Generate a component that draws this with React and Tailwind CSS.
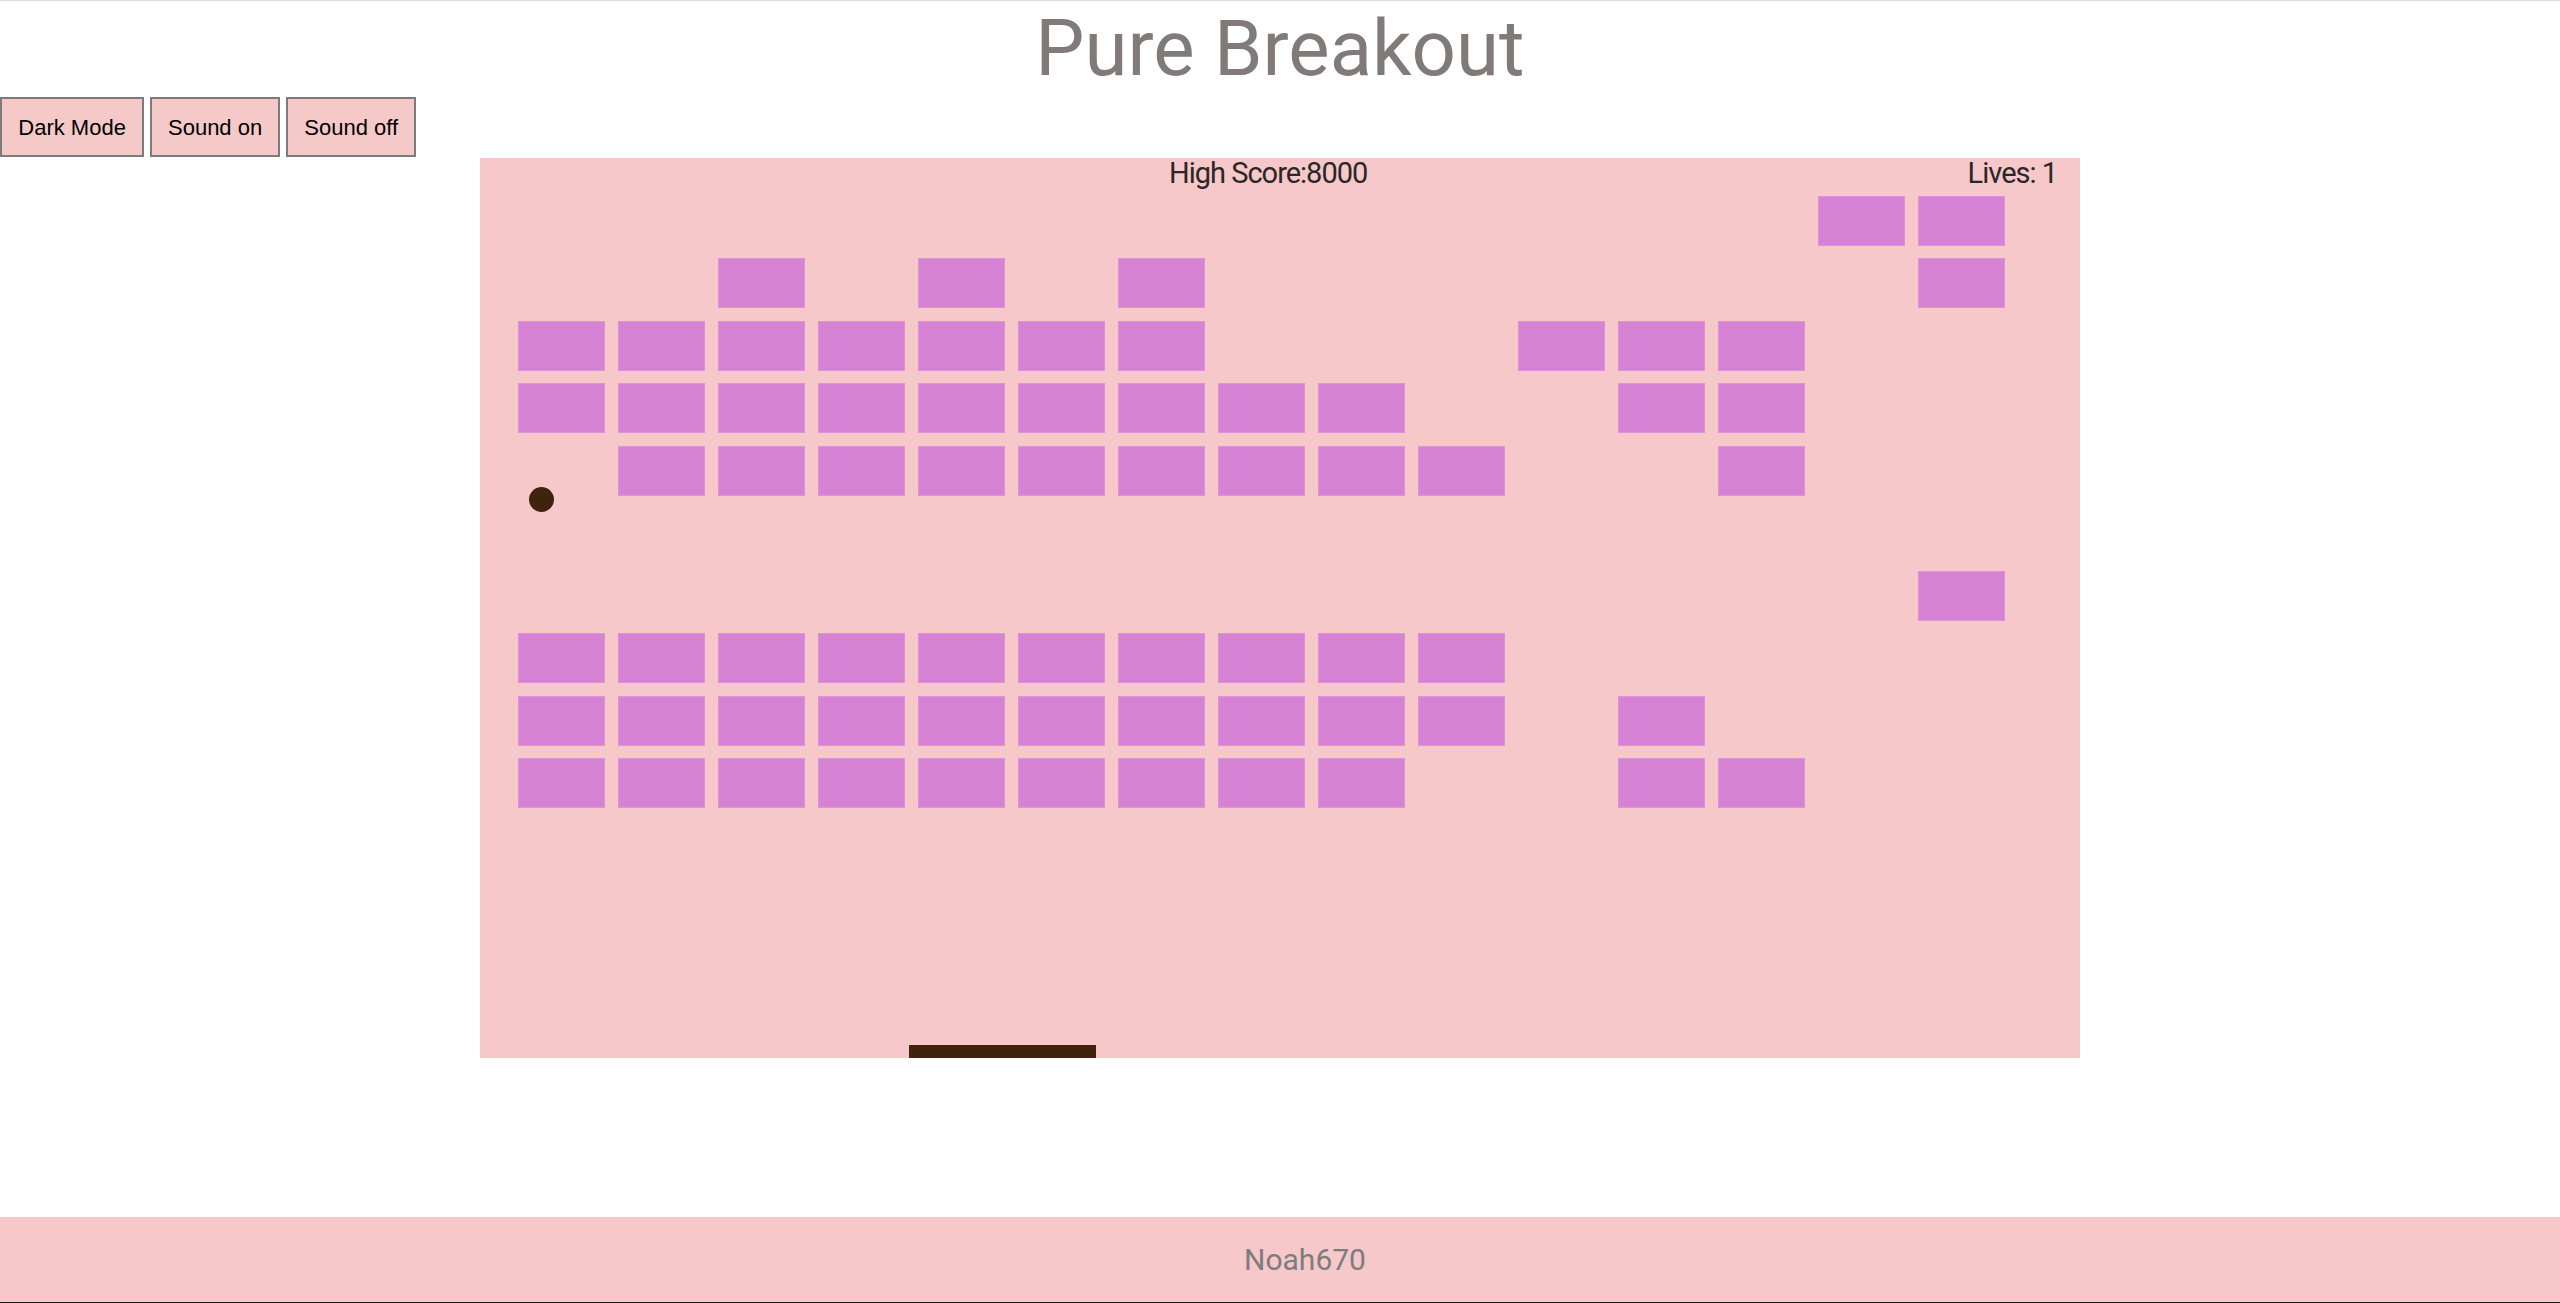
import React from "react";

const MAP = [
  [13, 14],
  [2, 4, 6, 14],
  [0, 1, 2, 3, 4, 5, 6, 10, 11, 12],
  [0, 1, 2, 3, 4, 5, 6, 7, 8, 11, 12],
  [1, 2, 3, 4, 5, 6, 7, 8, 9, 12],
  [],
  [14],
  [0, 1, 2, 3, 4, 5, 6, 7, 8, 9],
  [0, 1, 2, 3, 4, 5, 6, 7, 8, 9, 11],
  [0, 1, 2, 3, 4, 5, 6, 7, 8, 11, 12],
];

function Bricks() {
  const cells = [];
  MAP.forEach((row, r) => {
    for (let c = 0; c < 15; c++) {
      const on = row.includes(c);
      cells.push(
        <div
          key={r + "-" + c}
          className={on ? "bg-[#d783d5] border border-[#dc92d6]" : ""}
        />
      );
    }
  });
  return (
    <div className="grid grid-cols-[repeat(15,87.5px)] grid-rows-[repeat(10,50px)] gap-x-[12.5px] gap-y-[12.5px] pl-[37.5px] pt-[37.5px]">
      {cells}
    </div>
  );
}

function Btn({ children }) {
  return (
    <button className="h-[60px] px-[16.3px] bg-[#f6c9c9] border-2 border-[#7f7b7b] text-[22px] text-black leading-[25px]">
      {children}
    </button>
  );
}

export default function App() {
  return (
    <div className="min-h-[1303px] bg-white border-t border-[#dcdde0] font-['Roboto',sans-serif]">
      <h1 className="m-0 h-[96px] text-center text-[78px] leading-[96px] font-normal text-[#807a7a]">
        Pure Breakout
      </h1>
      <div className="flex gap-[5.5px] font-['Liberation_Sans',Arial,sans-serif]">
        <Btn>Dark Mode</Btn>
        <Btn>Sound on</Btn>
        <Btn>Sound off</Btn>
      </div>
      <div className="relative mx-auto mt-[1px] w-[1600px] h-[900px] bg-[#f6c8c9]">
        <Bricks />
        <div className="absolute top-[1px] left-[689px] text-[29px] leading-[29px] tracking-[-1px] text-[#2b2727] whitespace-nowrap">
          High Score:8000
        </div>
        <div className="absolute top-[1px] right-[23px] text-[29px] leading-[29px] tracking-[-1px] text-[#2b2727] whitespace-nowrap">
          Lives: 1
        </div>
        <div className="absolute left-[48.5px] top-[328.5px] w-[25px] h-[25px] rounded-full bg-[#40230f]" />
        <div className="absolute left-[428.5px] top-[887px] w-[187.5px] h-[13px] bg-[#40230f]" />
      </div>
      <div className="mt-[159px] h-[86px] bg-[#f6c8c9] border-b border-[#1a1a1a] flex items-center justify-center pl-[50px] text-[30px] text-[#7d7d7d]">
        Noah670
      </div>
    </div>
  );
}
